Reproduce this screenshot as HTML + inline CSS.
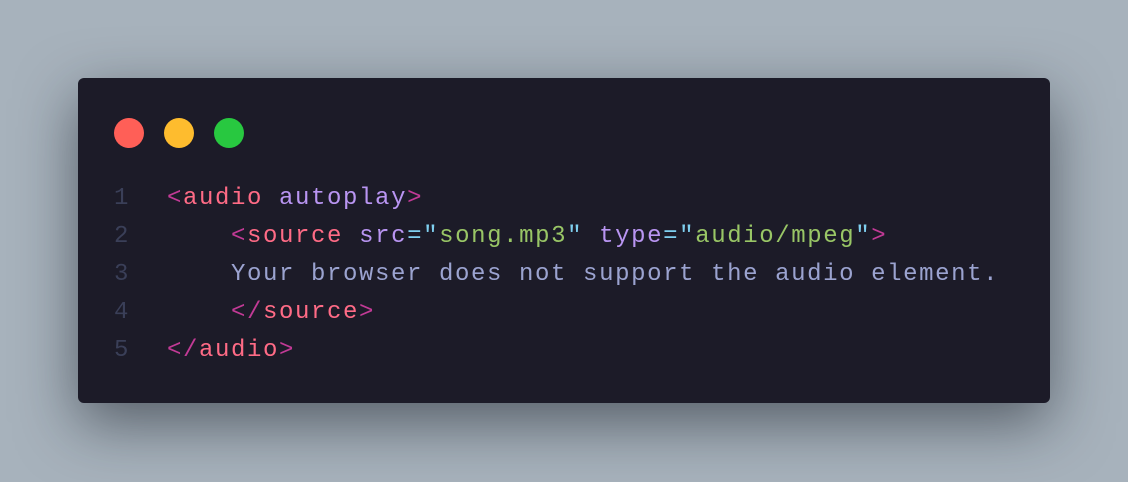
<!DOCTYPE html>
<html><head><style>
html,body{margin:0;padding:0}
body{width:1128px;height:482px;background:#a7b2bc;position:relative;overflow:hidden;font-family:"Liberation Mono",monospace}
.card{position:absolute;left:78px;top:78px;width:972px;height:325px;background:#1c1b28;border-radius:6px;box-shadow:0 20px 60px rgba(20,25,35,.55)}
.dot{position:absolute;top:40px;width:30px;height:30px;border-radius:50%}
.code{position:absolute;left:0;top:102px;width:972px;font-size:24px;letter-spacing:1.6px;line-height:38px}
.row{position:relative;height:38px}
.ln{position:absolute;left:36px;color:#3a3f58;width:20px}
.l{position:absolute;left:89px;white-space:pre}
.b{color:#c23a96}.t{color:#ff6b86}.a{color:#b995f2}.s{color:#99c666}.e{color:#7fd0f0}.x{color:#9ba3d0}
</style></head><body>
<div class="card">
<div class="dot" style="left:36px;background:#ff5f57"></div>
<div class="dot" style="left:86px;background:#febc2e"></div>
<div class="dot" style="left:136px;background:#28c840"></div>
<div class="code"><div class="row"><span class="ln">1</span><span class="l"><span class="b">&lt;</span><span class="t">audio</span> <span class="a">autoplay</span><span class="b">&gt;</span></span></div><div class="row"><span class="ln">2</span><span class="l">    <span class="b">&lt;</span><span class="t">source</span> <span class="a">src</span><span class="e">="</span><span class="s">song.mp3</span><span class="e">"</span> <span class="a">type</span><span class="e">="</span><span class="s">audio/mpeg</span><span class="e">"</span><span class="b">&gt;</span></span></div><div class="row"><span class="ln">3</span><span class="l x">    Your browser does not support the audio element.</span></div><div class="row"><span class="ln">4</span><span class="l">    <span class="b">&lt;/</span><span class="t">source</span><span class="b">&gt;</span></span></div><div class="row"><span class="ln">5</span><span class="l"><span class="b">&lt;/</span><span class="t">audio</span><span class="b">&gt;</span></span></div></div>
</div>
</body></html>
